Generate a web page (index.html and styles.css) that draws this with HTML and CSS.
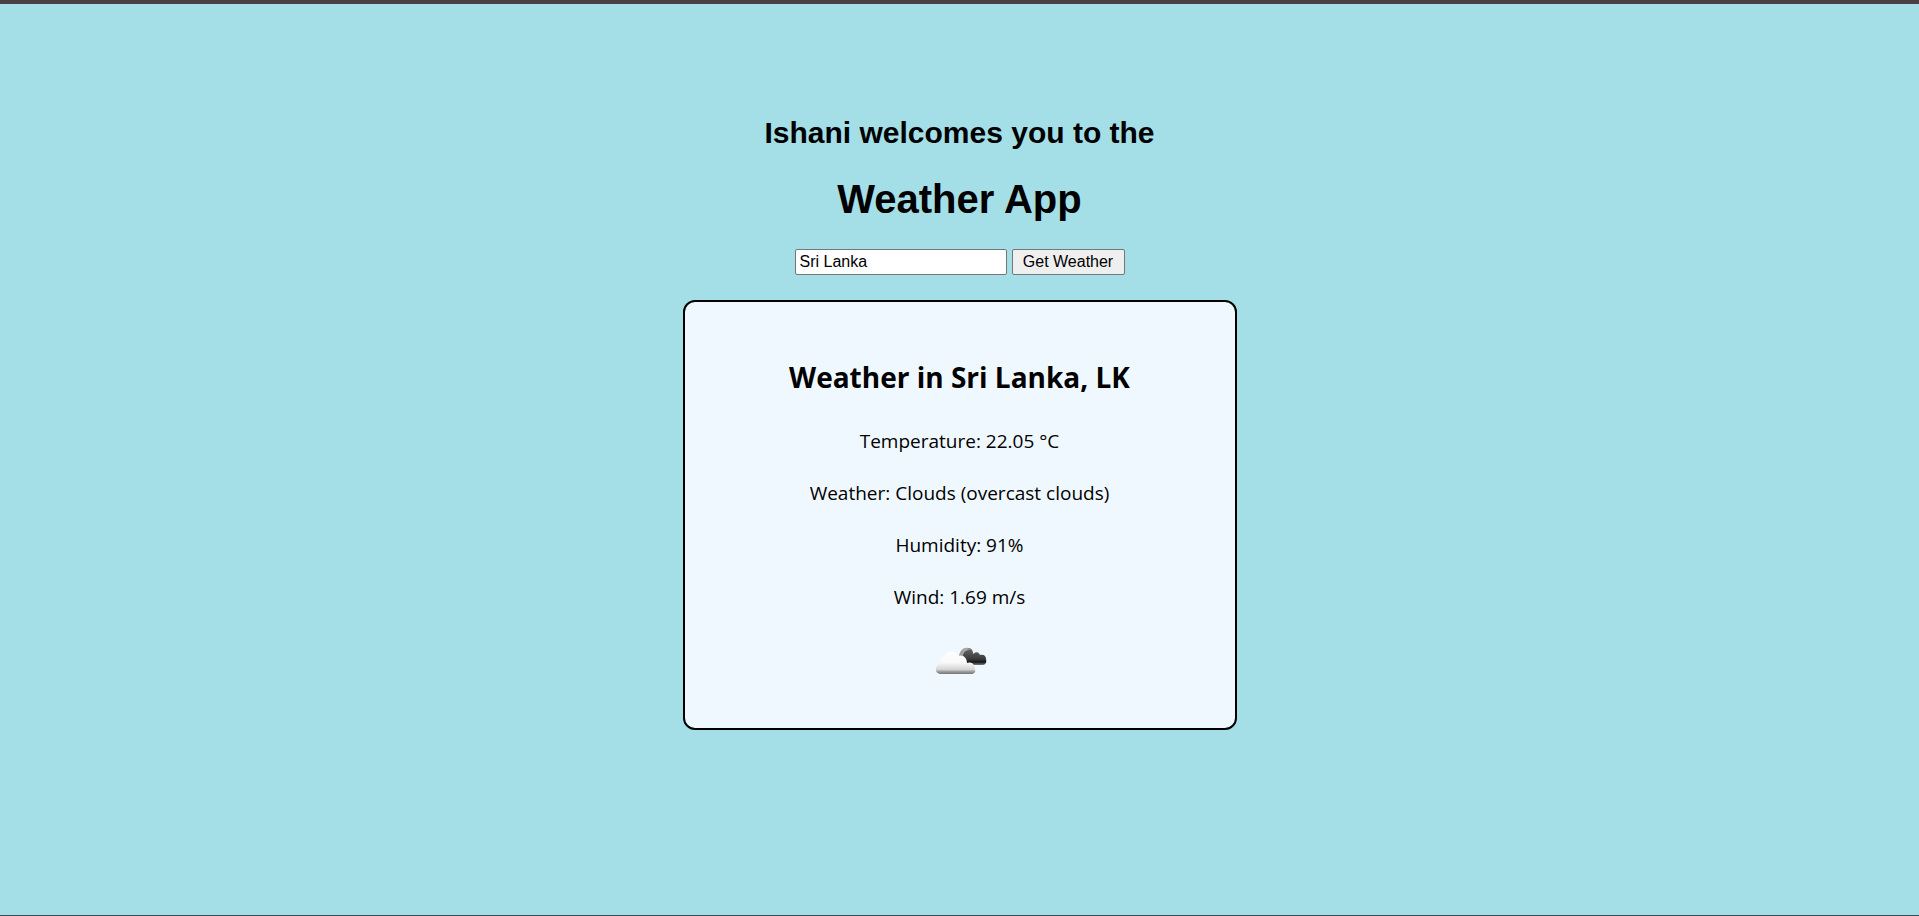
FILE: index.html
```html
<!DOCTYPE html>
<html lang="en">
<head>
<meta charset="utf-8">
<title>Weather App</title>
<link rel="stylesheet" href="styles.css">
</head>
<body>
<main class="page">
  <h2 class="welcome">Ishani welcomes you to the</h2>
  <h1 class="title">Weather App</h1>
  <form class="search">
    <input class="city" type="text" value="Sri Lanka" aria-label="City">
    <button class="submit" type="button">Get Weather</button>
  </form>
  <section class="card">
    <h2 class="place">Weather in Sri Lanka, LK</h2>
    <p class="fact">Temperature: 22.05 °C</p>
    <p class="fact">Weather: Clouds (overcast clouds)</p>
    <p class="fact">Humidity: 91%</p>
    <p class="fact">Wind: 1.69 m/s</p>
    <svg class="icon" viewBox="-1 -1 54 50" role="img" aria-label="Overcast clouds">
      <defs>
        <linearGradient id="dark" x1="0" y1="0" x2="0" y2="1">
          <stop offset="0" stop-color="#606060"/>
          <stop offset=".6" stop-color="#3c3c3c"/>
          <stop offset=".8" stop-color="#181818"/>
          <stop offset="1" stop-color="#777"/>
        </linearGradient>
        <linearGradient id="light" x1="0" y1="0" x2="0" y2="1">
          <stop offset="0" stop-color="#fff"/>
          <stop offset=".5" stop-color="#f8f8f8"/>
          <stop offset=".8" stop-color="#d4d4d4"/>
          <stop offset=".9" stop-color="#999"/>
          <stop offset="1" stop-color="#757575"/>
        </linearGradient>
        <linearGradient id="rim" x1="0" y1="0" x2="1" y2="0">
          <stop offset="0" stop-color="#999"/>
          <stop offset=".55" stop-color="#aaa"/>
          <stop offset="1" stop-color="#505050"/>
        </linearGradient>
        <filter id="soft"><feGaussianBlur stdDeviation=".4"/></filter>
      </defs>
      <g filter="url(#soft)">
        <path fill="url(#rim)" d="M25 20C26 14 30 11 34 12C37 12 39 14 39 17L33 26Z"/>
        <path fill="url(#dark)" d="M30 25C27 20 30 14 35 14C37 14 39 16 39 18C42 15 45 16 46 19C50 18 52 20 52 23C53 27 51 29 48 29H35Z"/>
        <path fill="url(#light)" d="M6 38C0 37 1 29 6 27C6 23 8 20 11 20C13 14 22 14 24 20C29 18 33 22 33 27C38 25 41 29 41 33C42 36 40 38 37 38Z"/>
      </g>
    </svg>
  </section>
</main>
</body>
</html>
```
FILE: styles.css
```css
* { box-sizing: border-box; }

body {
  margin: 0;
  background: #a4dfe7;
  color: #000;
  font-family: "Liberation Sans", Arial, sans-serif;
}

.page {
  display: flex;
  flex-direction: column;
  align-items: center;
  min-height: 100vh;
  padding: 112px 16px 0;
  border-top: 4px solid #4a4043;
  border-bottom: 1px solid #3e4a55;
}

.welcome {
  margin: 0 0 25px;
  font-size: 30px;
  line-height: 34px;
}

.title {
  margin: 0 0 26px;
  font-size: 40px;
  line-height: 48px;
}

.search {
  display: flex;
  gap: 5px;
  margin-bottom: 25px;
}

.city,
.submit {
  height: 26px;
  border: 1px solid #767676;
  border-radius: 2px;
  color: #000;
  font: 16px "Liberation Sans", Arial, sans-serif;
}

.city {
  width: 212px;
  padding: 0 4px;
  background: #fff;
}

.submit {
  width: 113px;
  padding: 0;
  background: #efefef;
}

.card {
  display: flex;
  flex-direction: column;
  align-items: center;
  width: 100%;
  max-width: 554px;
  padding: 55px 40px 43px;
  border: 2px solid #000;
  border-radius: 12px;
  background: #f0f8ff;
  font-family: "Segoe UI", "Open Sans", "Noto Sans", sans-serif;
  text-align: center;
}

.place {
  margin: 0 0 30px;
  font-size: 28px;
  line-height: 40px;
}

.fact {
  margin: 0 0 24px;
  font-size: 19px;
  line-height: 28px;
}

.icon {
  width: 54px;
  height: 50px;
}
```
